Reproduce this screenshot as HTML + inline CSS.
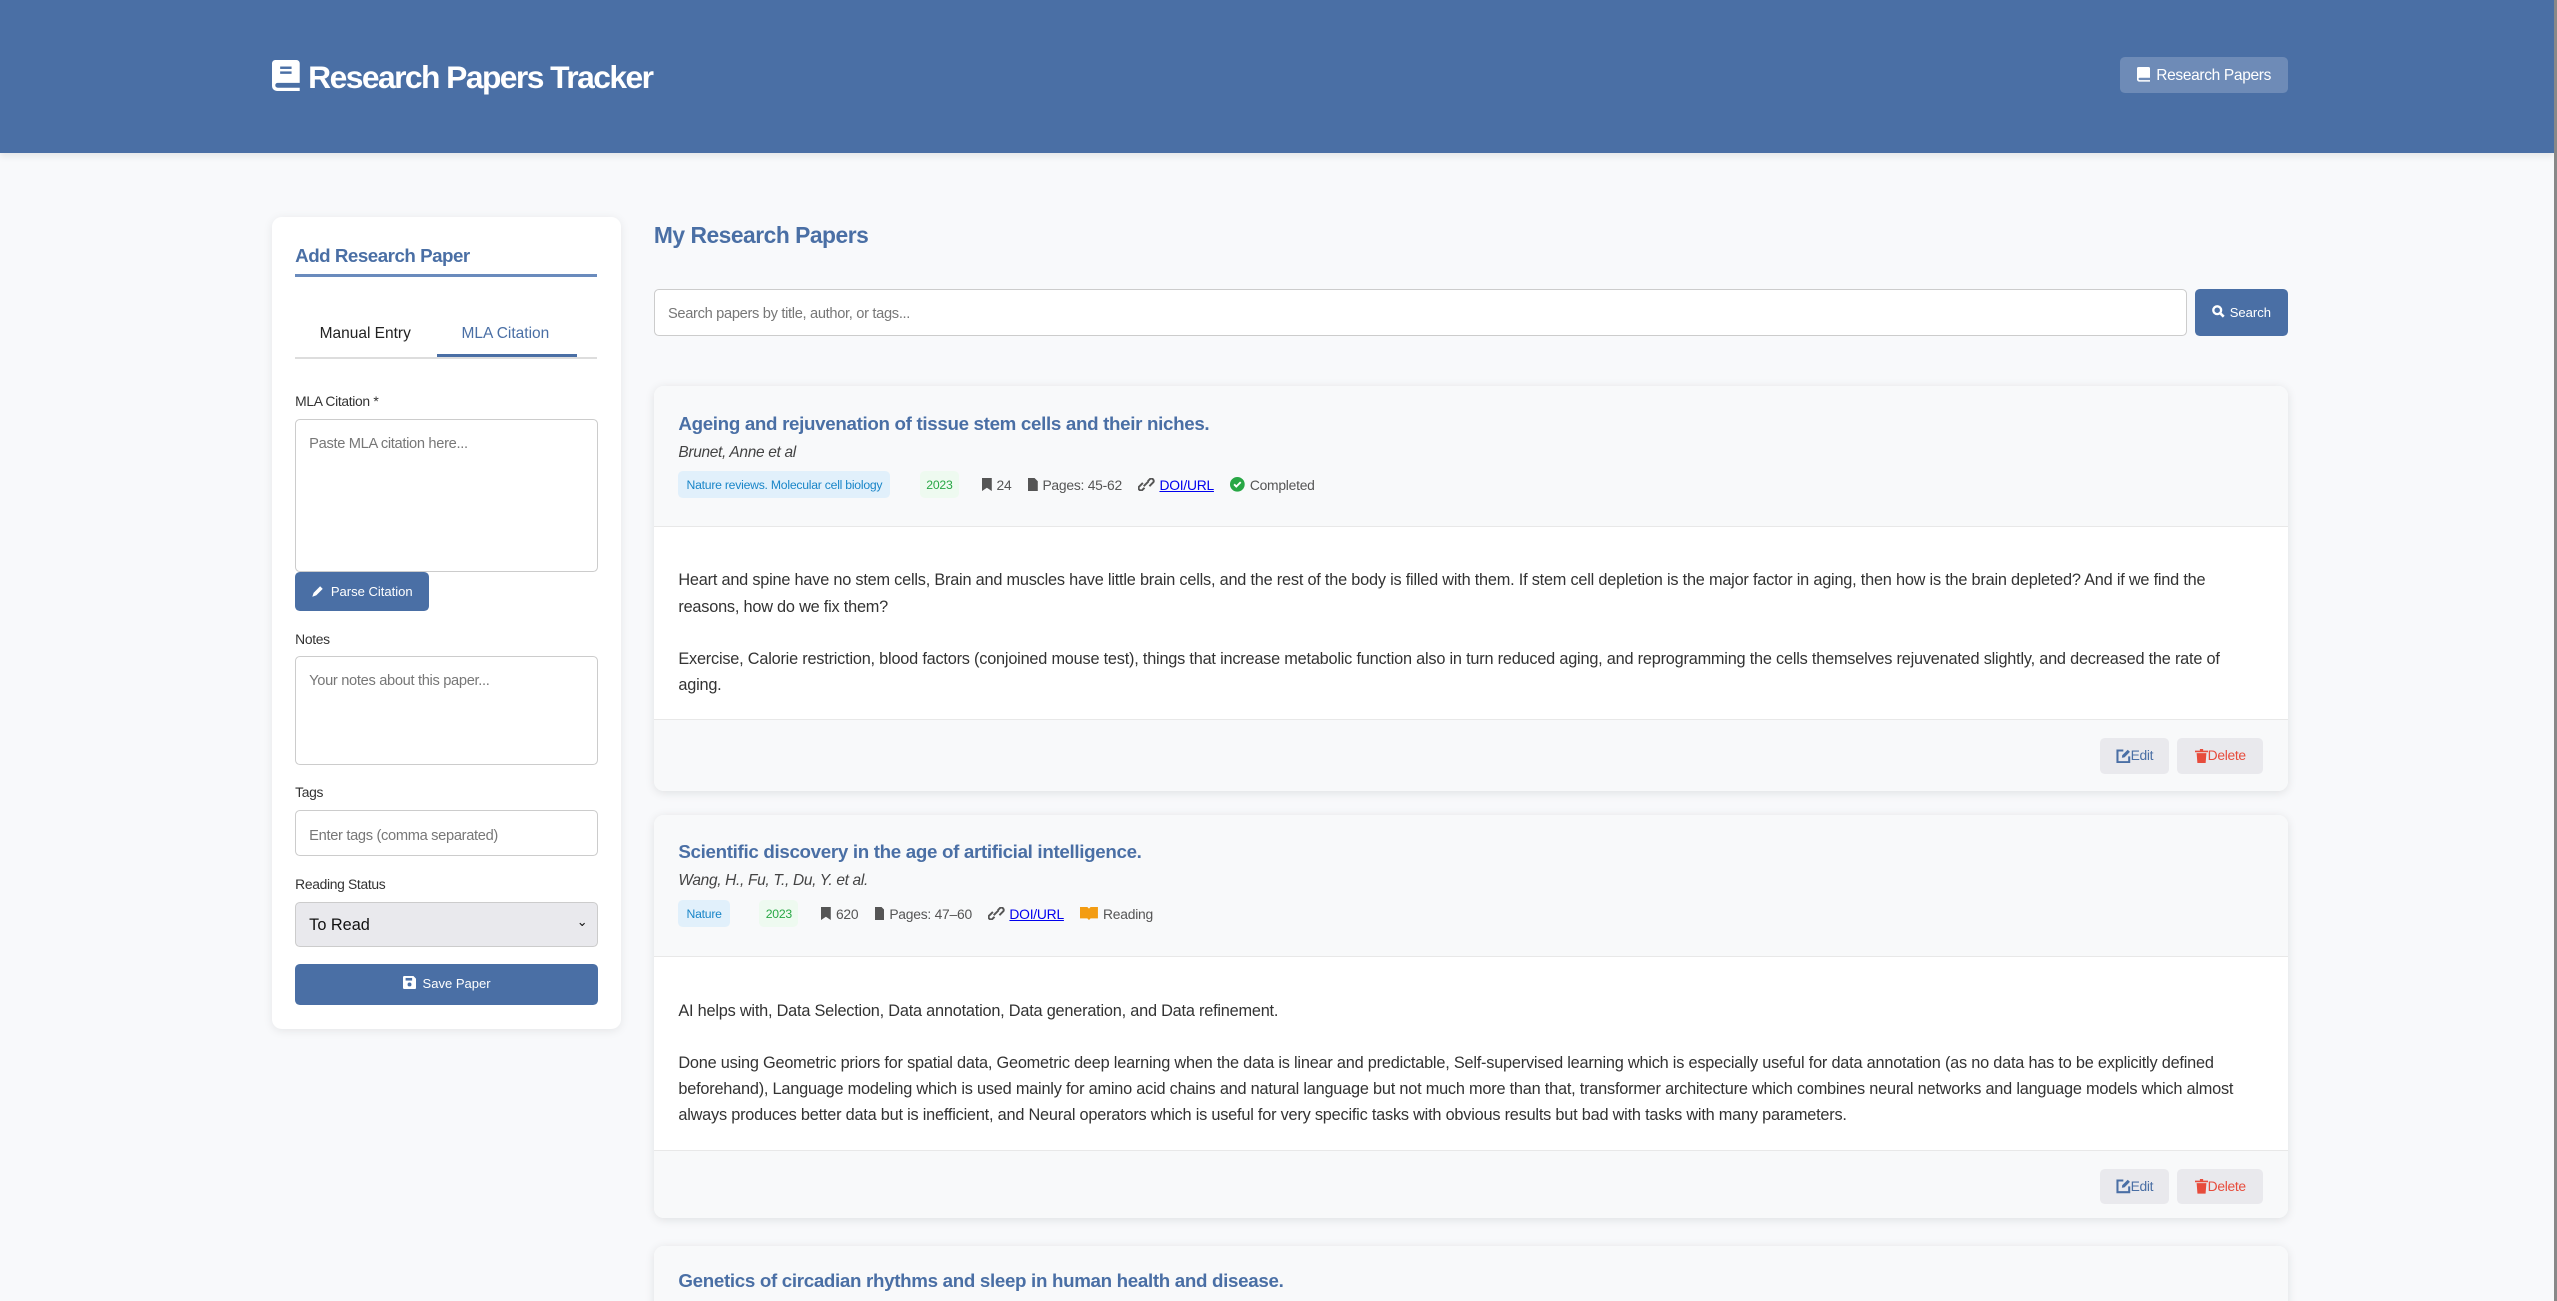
<!DOCTYPE html>
<html><head><meta charset="utf-8">
<style>
html,body{margin:0;padding:0;background:#f8f9fb;overflow:hidden;width:2557px;height:1301px}
#z{zoom:1.6307;width:1568px;height:798px;position:relative;font-family:"Liberation Sans",sans-serif;color:#333}
.abs{position:absolute}
header{position:absolute;left:0;top:0;width:1566px;height:94px;background:#4a6fa5;box-shadow:0 2px 4px rgba(0,0,0,.08)}
.h1{left:167px;top:36px;color:#fff;font-size:19.5px;letter-spacing:-.95px;font-weight:bold;white-space:nowrap}
.navbtn{left:1300px;top:35px;width:103px;height:22px;background:rgba(255,255,255,.2);border-radius:3px;color:#fff;font-size:9.5px;letter-spacing:-.2px;line-height:23px;text-align:center}
.card{background:#fff;border-radius:6px;box-shadow:0 1px 6px rgba(0,0,0,.08)}
.lbl{font-size:8.5px;color:#333;letter-spacing:-.2px;white-space:nowrap}
.inp{background:#fff;border:1px solid #ccc;border-radius:3px;box-sizing:border-box;font-size:9px;color:#777;padding:10px 8px;letter-spacing:-.2px;white-space:nowrap}
.btn{background:#4a6fa5;color:#fff;border-radius:3px;font-size:8px;text-align:center;white-space:nowrap}
.pc{left:401px;width:1002px;background:#fff;border-radius:6px;box-shadow:0 1px 6px rgba(0,0,0,.1);overflow:hidden}
.ph{background:#f8f9fa;border-bottom:1px solid #e8e8e8;position:relative;box-sizing:border-box}
.pt{position:absolute;left:15px;color:#4a6fa5;font-size:11.5px;font-weight:bold;letter-spacing:-.2px;white-space:nowrap}
.pa{position:absolute;left:15px;font-size:9.5px;font-style:italic;color:#444;letter-spacing:-.2px;white-space:nowrap}
.meta{position:absolute;left:15px;font-size:8.5px;color:#555;white-space:nowrap;display:flex;align-items:center;letter-spacing:-.15px}
.j{background:#e1f0fb;color:#1a86c8;padding:4px 5px;border-radius:3px;font-size:7.5px}
.y{background:#eefaf0;color:#28a745;padding:4px 4px;border-radius:3px;font-size:7.5px;margin-left:18px}
.m{margin-left:10px;display:flex;align-items:center}
.m svg{margin-right:3px}
.doi{color:#0000ee;text-decoration:underline}
.pb{position:relative;font-size:10px;letter-spacing:-.13px;line-height:16px;color:#333;white-space:nowrap;padding-left:15px;box-sizing:border-box}
.pf{background:#f8f9fa;border-top:1px solid #e8e8e8;position:relative;box-sizing:border-box}
.eb{position:absolute;top:11px;height:22px;background:#e9e9ed;border-radius:3px;font-size:8.5px;line-height:22px;display:flex;align-items:center;justify-content:center;letter-spacing:-.2px}
</style></head><body><div id="z">
<header>
 <div class="abs h1"><svg width="17" height="19" viewBox="0 0 17 19" style="vertical-align:-2px;margin-right:5px"><path d="M2 0h13a2 2 0 0 1 2 2v12H3.5a1.5 1.5 0 0 0 0 3H17v2H3a3 3 0 0 1-3-3V2a2 2 0 0 1 2-2z" fill="#fff"/><rect x="5" y="4" width="7" height="1.5" fill="#4a6fa5"/><rect x="5" y="7" width="7" height="1.5" fill="#4a6fa5"/></svg>Research Papers Tracker</div>
 <div class="abs navbtn"><svg width="8" height="9" viewBox="0 0 17 19" style="vertical-align:-1px;margin-right:4px"><path d="M2 0h13a2 2 0 0 1 2 2v12H3.5a1.5 1.5 0 0 0 0 3H17v2H3a3 3 0 0 1-3-3V2a2 2 0 0 1 2-2z" fill="#fff"/></svg>Research Papers</div>
</header>
<div class="abs" style="left:1566px;top:0;width:2px;height:798px;background:#888"></div>

<div class="abs card" style="left:167px;top:133px;width:214px;height:498px">
 <div class="abs" style="left:14px;top:17px;font-size:11.5px;font-weight:bold;color:#4a6fa5;letter-spacing:-.3px;white-space:nowrap">Add Research Paper</div>
 <div class="abs" style="left:14px;top:35px;width:185px;height:2px;background:#6a8bbd"></div>
 <div class="abs" style="left:29px;top:66px;font-size:9.5px;color:#222;letter-spacing:0;white-space:nowrap">Manual Entry</div>
 <div class="abs" style="left:116px;top:66px;font-size:9.5px;color:#4a6fa5;letter-spacing:0;white-space:nowrap">MLA Citation</div>
 <div class="abs" style="left:14px;top:86px;width:185px;height:1px;background:#ddd"></div>
 <div class="abs" style="left:101px;top:84px;width:86px;height:2px;background:#4a6fa5"></div>
 <div class="abs lbl" style="left:14px;top:108px">MLA Citation *</div>
 <div class="abs inp" style="left:14px;top:124px;width:186px;height:94px">Paste MLA citation here...</div>
 <div class="abs btn" style="left:14px;top:218px;width:82px;height:24px;line-height:24px"><svg width="8" height="8" viewBox="0 0 10 10" style="vertical-align:-1px;margin-right:4px"><path d="M1 9l1-3 5-5 2 2-5 5z" fill="#fff"/></svg>Parse Citation</div>
 <div class="abs lbl" style="left:14px;top:254px">Notes</div>
 <div class="abs inp" style="left:14px;top:269px;width:186px;height:67px">Your notes about this paper...</div>
 <div class="abs lbl" style="left:14px;top:348px">Tags</div>
 <div class="abs inp" style="left:14px;top:364px;width:186px;height:28px">Enter tags (comma separated)</div>
 <div class="abs lbl" style="left:14px;top:404px">Reading Status</div>
 <div class="abs" style="left:14px;top:420px;width:186px;height:28px;background:#e9e9ed;border:1px solid #ccc;border-radius:3px;box-sizing:border-box;font-size:10px;color:#111;padding:8px 8px;white-space:nowrap">To Read<span style="position:absolute;right:6px;top:7px;font-size:8px">&#8964;</span></div>
 <div class="abs btn" style="left:14px;top:458px;width:186px;height:25px;line-height:25px"><svg width="8" height="8" viewBox="0 0 10 10" style="vertical-align:-1px;margin-right:4px"><path d="M1 0h7l2 2v7a1 1 0 0 1-1 1H1a1 1 0 0 1-1-1V1a1 1 0 0 1 1-1z" fill="#fff"/><circle cx="5" cy="6.5" r="1.5" fill="#4a6fa5"/><rect x="2" y="1.5" width="5" height="2" fill="#4a6fa5"/></svg>Save Paper</div>
</div>

<div class="abs" style="left:401px;top:136px;font-size:14px;font-weight:bold;color:#4a6fa5;letter-spacing:-.3px;white-space:nowrap">My Research Papers</div>
<div class="abs inp" style="left:401px;top:177px;width:940px;height:29px;padding:10px 8px;font-size:9px">Search papers by title, author, or tags...</div>
<div class="abs btn" style="left:1346px;top:177px;width:57px;height:29px;line-height:29px"><svg width="8" height="8" viewBox="0 0 10 10" style="vertical-align:-1px;margin-right:3px"><circle cx="4" cy="4" r="3" fill="none" stroke="#fff" stroke-width="1.8"/><path d="M6 6l3 3" stroke="#fff" stroke-width="2"/></svg>Search</div>

<!-- card 1 -->
<div class="abs pc" style="top:237px;height:248px">
 <div class="ph" style="height:86px">
  <div class="pt" style="top:16px">Ageing and rejuvenation of tissue stem cells and their niches.</div>
  <div class="pa" style="top:35px">Brunet, Anne et al</div>
  <div class="meta" style="top:52px"><span class="j">Nature reviews. Molecular cell biology</span><span class="y">2023</span>
   <span class="m" style="margin-left:14px"><svg width="6" height="8" viewBox="0 0 6 8"><path d="M0 0h6v8L3 6 0 8z" fill="#555"/></svg>24</span>
   <span class="m"><svg width="6" height="8" viewBox="0 0 6 8"><path d="M0 0h4l2 2v6H0z" fill="#555"/></svg>Pages: 45-62</span>
   <span class="m"><svg width="10" height="8" viewBox="0 0 10 8"><path d="M4 6L2.5 7.5a1.5 1.5 0 0 1-2-2L3 3M6 2l1.5-1.5a1.5 1.5 0 0 1 2 2L7 5M3.5 5l3-3" stroke="#555" stroke-width="1.2" fill="none"/></svg><span class="doi">DOI/URL</span></span>
   <span class="m"><svg width="9" height="9" viewBox="0 0 10 10"><circle cx="5" cy="5" r="5" fill="#28a745"/><path d="M2.8 5l1.5 1.5 3-3" stroke="#fff" stroke-width="1.3" fill="none"/></svg>Completed</span>
  </div>
 </div>
 <div class="pb" style="height:118px;padding-top:25px">Heart and spine have no stem cells, Brain and muscles have little brain cells, and the rest of the body is filled with them. If stem cell depletion is the major factor in aging, then how is the brain depleted? And if we find the<br>reasons, how do we fix them?<br><br>Exercise, Calorie restriction, blood factors (conjoined mouse test), things that increase metabolic function also in turn reduced aging, and reprogramming the cells themselves rejuvenated slightly, and decreased the rate of<br>aging.</div>
 <div class="pf" style="height:44px">
  <div class="eb" style="left:887px;width:42px;color:#4a6fa5"><svg width="9" height="9" viewBox="0 0 10 10"><path d="M5 1H1v8h8V5" stroke="#4a6fa5" stroke-width="1.4" fill="none"/><path d="M4 6l.3-1.8L8 .5l1.5 1.5L5.8 5.7z" fill="#4a6fa5"/></svg>Edit</div>
  <div class="eb" style="left:934px;width:53px;color:#e74c3c"><svg width="8" height="9" viewBox="0 0 8 9"><path d="M0 1h8v1H0zM3 0h2v1H3zM1 2.5h6L6.5 9h-5z" fill="#e74c3c"/></svg>Delete</div>
 </div>
</div>

<!-- card 2 -->
<div class="abs pc" style="top:500px;height:247px">
 <div class="ph" style="height:87px">
  <div class="pt" style="top:16px">Scientific discovery in the age of artificial intelligence.</div>
  <div class="pa" style="top:35px">Wang, H., Fu, T., Du, Y. et al.</div>
  <div class="meta" style="top:52px"><span class="j">Nature</span><span class="y">2023</span>
   <span class="m" style="margin-left:14px"><svg width="6" height="8" viewBox="0 0 6 8"><path d="M0 0h6v8L3 6 0 8z" fill="#555"/></svg>620</span>
   <span class="m"><svg width="6" height="8" viewBox="0 0 6 8"><path d="M0 0h4l2 2v6H0z" fill="#555"/></svg>Pages: 47–60</span>
   <span class="m"><svg width="10" height="8" viewBox="0 0 10 8"><path d="M4 6L2.5 7.5a1.5 1.5 0 0 1-2-2L3 3M6 2l1.5-1.5a1.5 1.5 0 0 1 2 2L7 5M3.5 5l3-3" stroke="#555" stroke-width="1.2" fill="none"/></svg><span class="doi">DOI/URL</span></span>
   <span class="m"><svg width="11" height="8" viewBox="0 0 11 8"><path d="M0 0h4.5l1 1v7l-1-1H0zM11 0H6.5l-1 1v7l1-1H11z" fill="#f39c12"/></svg>Reading</span>
  </div>
 </div>
 <div class="pb" style="height:118px;padding-top:25px">AI helps with, Data Selection, Data annotation, Data generation, and Data refinement.<br><br>Done using Geometric priors for spatial data, Geometric deep learning when the data is linear and predictable, Self-supervised learning which is especially useful for data annotation (as no data has to be explicitly defined<br>beforehand), Language modeling which is used mainly for amino acid chains and natural language but not much more than that, transformer architecture which combines neural networks and language models which almost<br>always produces better data but is inefficient, and Neural operators which is useful for very specific tasks with obvious results but bad with tasks with many parameters.</div>
 <div class="pf" style="height:42px">
  <div class="eb" style="left:887px;width:42px;color:#4a6fa5"><svg width="9" height="9" viewBox="0 0 10 10"><path d="M5 1H1v8h8V5" stroke="#4a6fa5" stroke-width="1.4" fill="none"/><path d="M4 6l.3-1.8L8 .5l1.5 1.5L5.8 5.7z" fill="#4a6fa5"/></svg>Edit</div>
  <div class="eb" style="left:934px;width:53px;color:#e74c3c"><svg width="8" height="9" viewBox="0 0 8 9"><path d="M0 1h8v1H0zM3 0h2v1H3zM1 2.5h6L6.5 9h-5z" fill="#e74c3c"/></svg>Delete</div>
 </div>
</div>

<!-- card 3 -->
<div class="abs pc" style="top:764px;height:60px">
 <div class="ph" style="height:60px">
  <div class="pt" style="top:15px">Genetics of circadian rhythms and sleep in human health and disease.</div>
 </div>
</div>
</div></body></html>
